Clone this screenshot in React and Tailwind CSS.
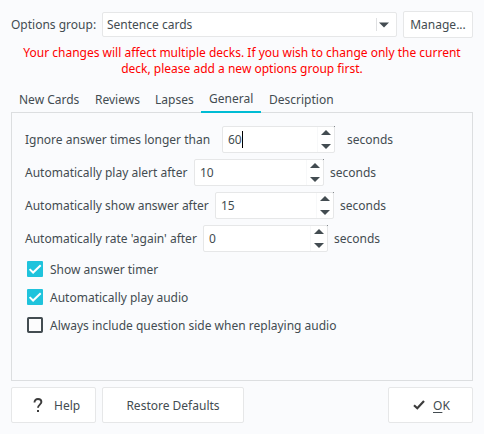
const field = 'rounded-[2px] border border-[#e6e7e8] bg-white';

function Spin({ label, value, labelWidth, boxWidth, gap, focused }) {
  return (
    <div className="flex h-[27px] items-center whitespace-nowrap">
      <span className={`shrink-0 ${labelWidth}`}>{label}</span>
      <div className={`relative flex h-[27px] shrink-0 items-center pl-[5px] ${field} ${boxWidth}`}>
        <span>{value}</span>
        {focused && <span className="h-[17px] w-px bg-black" />}
        <span className="ml-auto h-full w-[17px] border-l border-[#f7f8f9]">
          <svg className="block" width="16" height="25" viewBox="0 0 16 25" fill="#434c51">
            <path d="M3 8h10L8 3z" />
            <path d="M3 17h10l-5 5z" />
          </svg>
        </span>
        <span className="absolute -right-px -top-px h-px w-px bg-[#858a8e]" />
      </div>
      <span className={gap}>seconds</span>
    </div>
  );
}

function Check({ label, checked }) {
  return (
    <div className="flex h-4 items-center gap-[7px] pl-0.5 whitespace-nowrap">
      <svg className="shrink-0" width="16" height="16" viewBox="0 0 16 16" fill="none">
        {checked ? (
          <>
            <rect width="16" height="16" rx="1" fill="#1fc3dc" />
            <path d="M2.6 8.1l3.5 3.4 7.6-7.2" stroke="#fff" strokeWidth="2" />
          </>
        ) : (
          <rect x="1" y="1" width="14" height="14" rx="0.7" fill="#fcfcfd" stroke="#434c51" strokeWidth="2" />
        )}
      </svg>
      <span className="pt-0.5">{label}</span>
    </div>
  );
}

export default function App() {
  return (
    <div className="flex h-[434px] w-[484px] flex-col overflow-hidden bg-[#fafbfd] px-[11px] pt-[11px] font-['Noto_Sans',sans-serif] text-[12px] leading-[16px] text-[#434c51]">
      <div className="flex h-[27px] items-center whitespace-nowrap">
        <span className="w-[91px] shrink-0">Options group:</span>
        <div className={`flex h-[25px] w-[295px] shrink-0 items-center pl-1 ${field}`}>
          <span>Sentence cards</span>
          <span className="ml-auto h-[13px] w-px bg-[#dfe0e2]" />
          <svg className="mr-[7px] ml-[2px]" width="10" height="6" viewBox="0 0 10 6" fill="#434c51">
            <path d="M0 .5h10l-5 5z" />
          </svg>
        </div>
        <button className={`ml-1.5 h-[27px] w-[70px] ${field}`}>Manage...</button>
      </div>

      <p className="mt-[7px] text-center text-[#ff0000] whitespace-nowrap">
        Your changes will affect multiple decks. If you wish to change only the current
        <br />
        deck, please add a new options group first.
      </p>

      <div className="mt-[13px] flex h-[22px] whitespace-nowrap">
        <span className="w-[76px] pt-[2px] pl-2">New Cards</span>
        <span className="w-[60px] pt-[2px] pl-[8px]">Reviews</span>
        <span className="w-[54px] pt-[2px] pl-[8px]">Lapses</span>
        <span className="relative z-10 h-[23px] w-[60px] border-b-2 border-[#00bcd4] pt-px pl-2">General</span>
        <span className="pt-[2px] pl-2">Description</span>
      </div>

      <div className="flex h-[269px] shrink-0 flex-col border border-[#dcdee0] pt-[13px] pl-[13px]">
        <div className="flex flex-col gap-1.5">
          <Spin label="Ignore answer times longer than" value="60" labelWidth="w-[197px]" boxWidth="w-[113px]" gap="ml-3" focused />
          <Spin label="Automatically play alert after" value="10" labelWidth="w-[169px]" boxWidth="w-[130px]" gap="ml-1.5" />
          <Spin label="Automatically show answer after" value="15" labelWidth="w-[190px]" boxWidth="w-[119px]" gap="ml-1.5" />
          <Spin label="Automatically rate 'again' after" value="0" labelWidth="w-[178px]" boxWidth="w-[125px]" gap="ml-1.5" />
        </div>
        <div className="mt-[9px] flex flex-col gap-3">
          <Check label="Show answer timer" checked />
          <Check label="Automatically play audio" checked />
          <Check label="Always include question side when replaying audio" />
        </div>
      </div>

      <div className="mt-1.5 flex h-9 shrink-0">
        <button className={`flex w-[85px] items-center pl-[21px] ${field}`}>
          <svg width="10" height="14" viewBox="0 0 10 14" fill="none">
            <path d="M1.5 4.5C1.5 2.4 2.9 1 5 1s3.4 1.3 3.4 3.1C8.4 6.5 5 6.9 5 9.8" stroke="#3c3c3c" strokeWidth="1.9" />
            <path d="M4 12h2v2H4z" fill="#3c3c3c" />
          </svg>
          <span className="ml-[11px] pt-px">Help</span>
        </button>
        <button className={`ml-1.5 w-[142px] pt-px ${field}`}>Restore Defaults</button>
        <button className={`ml-auto flex w-[85px] items-center pl-6 ${field}`}>
          <svg width="12" height="10" viewBox="0 0 12 10" fill="none">
            <path d="M1 5.2l3.3 3L11 1" stroke="#3c3c3c" strokeWidth="2.2" />
          </svg>
          <span className="ml-2 pt-px"><span className="underline decoration-1 underline-offset-2">O</span>K</span>
        </button>
      </div>
    </div>
  );
}
